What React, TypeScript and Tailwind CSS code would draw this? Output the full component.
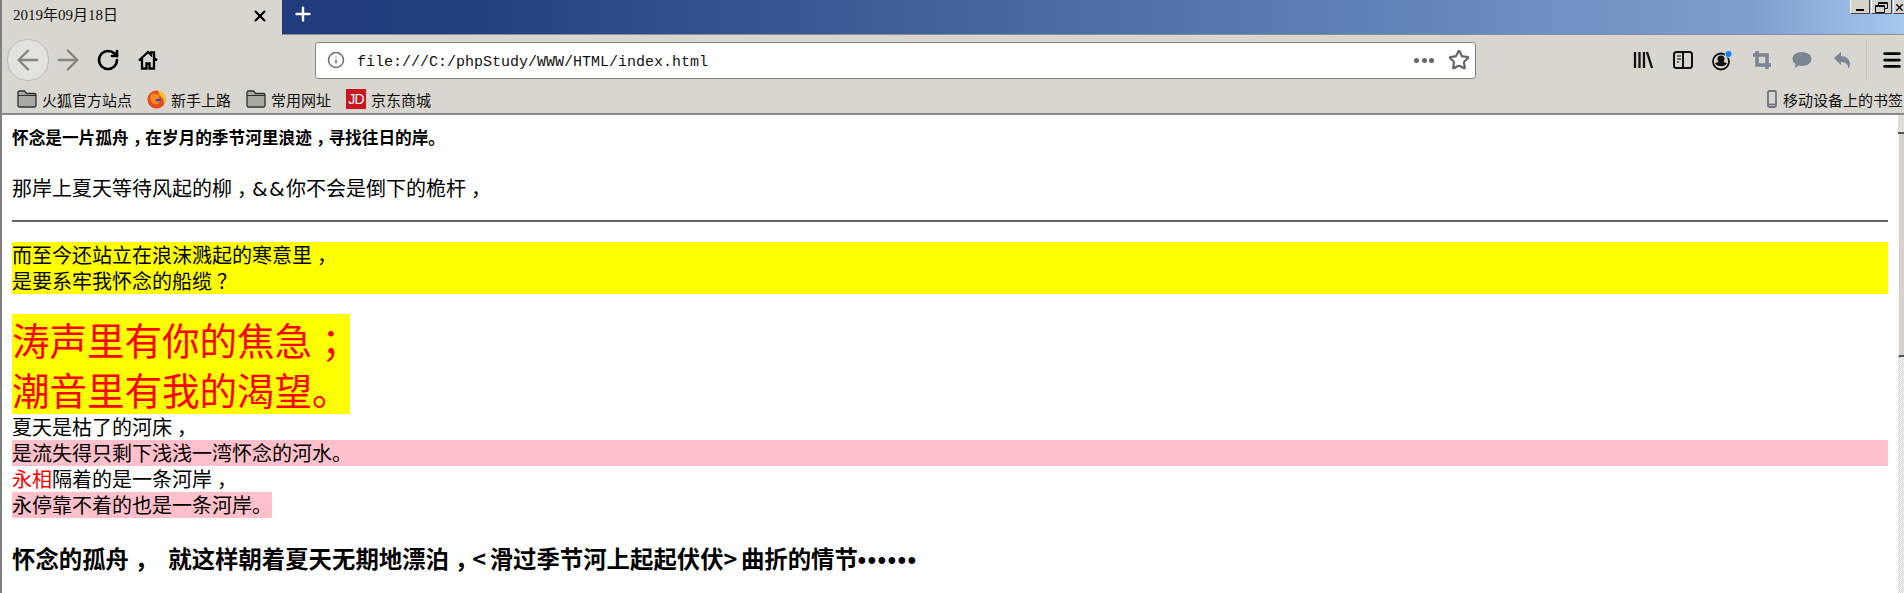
import { ArrowLeft, ArrowRight, Info, Menu, RotateCw, Star, X, Plus } from "lucide-react"

const cjk = "font-['Noto_Sans_CJK_SC','Liberation_Sans',sans-serif]"

// full-width punctuation sits in the middle of its cell in the picture
function P({ children }: { children: React.ReactNode }) {
  return <span className="mx-[.25em] [font-feature-settings:'halt']">{children}</span>
}

function Folder() {
  return (
    <svg width="20" height="18" viewBox="0 0 20 18" className="shrink-0">
      <path d="M1 2.500A1.500 1.500 0 0 1 2.500 1h5l2 2.500h8A1.500 1.500 0 0 1 19 5v10.500a1.500 1.500 0 0 1-1.500 1.500h-15A1.500 1.500 0 0 1 1 15.500z" fill="#a9a8a2" stroke="#2e2e2e" strokeWidth="1.300" />
      <path d="M1 5.500h18" stroke="#2e2e2e" strokeWidth="1" />
    </svg>
  )
}

function Firefox() {
  return (
    <svg width="19" height="19" viewBox="0 0 20 20" className="shrink-0">
      <circle cx="10" cy="10" r="9.500" fill="#e8491f" />
      <path d="M12 .5c4.500 1 7.500 5 7.500 9.500 0 2-.6 3.500-1.500 5 .3-4-1.500-7-4.500-9C12.500 5 12 3 12 .5z" fill="#ffc21a" />
      <circle cx="10" cy="10.500" r="4.300" fill="#4a3fb5" />
      <path d="M4 5c2-2 5.500-2 8 .5 1 1 1.500 2.500 1 4h-3.500c-.8 1-.5 2 .5 2.500 1.500.5 3 0 4-1-.5 3-3 4.500-5.500 4C4.500 14.500 2.500 9 4 5z" fill="#ff8a1c" />
    </svg>
  )
}

function Mark({ label, icon }: { label: string; icon: React.ReactNode }) {
  return (
    <div className={`flex items-center gap-[5px] text-[15px] leading-none text-[#111] ${cjk}`}>
      {icon}
      <span>{label}</span>
    </div>
  )
}

function WindowButtons() {
  const btn = "flex h-[14px] items-end justify-center border-l border-l-white border-r border-b border-r-[#444] border-b-[#444] bg-[#d6d3ce]"
  return (
    <div className="absolute right-0 top-0 flex gap-[1px]">
      <div className={`${btn} w-[20px] pb-[2px]`}>
        <div className="h-[2px] w-[8px] bg-black" />
      </div>
      <div className={`${btn} w-[21px] items-center`}>
        <svg width="13" height="11" viewBox="0 0 13 11">
          <path d="M3.500 3V.5h9v6H10M.5 3.500h9v7h-9zM.5 4.500h9M3.500 1.500h9" fill="none" stroke="#111" />
        </svg>
      </div>
      <div className={`${btn} w-[11px] items-center justify-start overflow-hidden border-r-0`}>
        <X size={11} strokeWidth={3} className="shrink-0" />
      </div>
    </div>
  )
}

function Browser() {
  return (
    <div className="shrink-0 border-b-2 border-[#8a8a8a] bg-[#d9d6d0]">
      <div className="relative flex h-[35px] border-b border-[#8f8f8f] bg-[linear-gradient(90deg,#1c3679_0%,#23407f_25%,#5f82b6_72%,#7e9fcf_92%,#a6c8ee_100%)]">
        <div className="-mb-px flex w-[280px] items-center justify-between bg-[#d9d6d0] pb-[4px] pl-[11px] pr-[13px]">
          <span className="font-['Liberation_Serif','Noto_Sans_CJK_SC',serif] text-[15px] text-[#111]">2019年09月18日</span>
          <X size={18} strokeWidth={2.6} className="text-black" />
        </div>
        <div className="ml-[10px] flex items-center pb-[6px]">
          <Plus size={22} strokeWidth={2.6} className="text-white" />
        </div>
        <WindowButtons />
      </div>
      <div className="flex h-[50px] items-center pl-[5px]">
        <div className="flex size-[42px] shrink-0 items-center justify-center rounded-full border border-[#bdbbb5] bg-[#e4e3de]">
          <ArrowLeft size={32} strokeWidth={1.7} className="text-[#85847f]" />
        </div>
        <ArrowRight size={32} strokeWidth={1.7} className="ml-[3px] shrink-0 text-[#85847f]" />
        <RotateCw size={24} strokeWidth={2.7} className="ml-[12px] shrink-0 text-black" />
        <svg width="20" height="20" viewBox="0 0 20 20" className="ml-[18px] shrink-0">
          <path d="M1 10.500 10 2l3 2.800V2.500h3v5l3 3M4 8.500V18.500h4.500v-5h3v5H16V8.500" fill="none" stroke="#000" strokeWidth="2.300" />
        </svg>
        <div className="ml-[157px] flex h-[37px] w-[1161px] shrink-0 items-center rounded-[3px] border border-[#858585] bg-white pl-[11px] pr-[5px]">
          <Info size={18} strokeWidth={2} className="text-[#6f6f6f]" />
          <span className="ml-[12px] flex-1 pt-[7px] font-['Liberation_Mono',monospace] text-[15px] text-[#111]">file:///C:/phpStudy/WWW/HTML/index.html</span>
          <div className="flex gap-[2.500px]">
            <div className="size-[5px] rounded-full bg-[#666]" />
            <div className="size-[5px] rounded-full bg-[#666]" />
            <div className="size-[5px] rounded-full bg-[#666]" />
          </div>
          <Star size={22} strokeWidth={2.4} className="ml-[14px] text-[#666]" />
        </div>
        <div className="ml-[157px] flex items-center">
          <svg width="20" height="18" viewBox="0 0 20 18"><path d="M2 1v16M6.500 1v16M11 1v16M14 1l5 16" stroke="#111" strokeWidth="2.300" fill="none" /></svg>
          <svg width="20" height="18" viewBox="0 0 20 18" className="ml-[20px]">
            <rect x="1" y="1" width="18" height="16" rx="2.500" fill="none" stroke="#111" strokeWidth="2" />
            <path d="M10 1v16" stroke="#111" strokeWidth="2" />
            <path d="M4 5h4M4 8h4M4 11h2" stroke="#111" strokeWidth="1.200" />
          </svg>
          <svg width="22" height="22" viewBox="0 0 22 22" className="ml-[18px]">
            <circle cx="10" cy="12.500" r="8" fill="none" stroke="#111" strokeWidth="1.800" />
            <circle cx="10" cy="10" r="3.500" fill="#111" />
            <path d="M4 14.500c2-2.500 10-2.500 12 0-1 1.500-3 2.700-6 2.700s-5-1.200-6-2.700z" fill="#111" />
            <circle cx="17.500" cy="5" r="3.800" fill="#d9d6d0" />
            <circle cx="17.500" cy="5" r="3" fill="#0a84ff" />
          </svg>
          <svg width="20" height="20" viewBox="0 0 20 20" className="ml-[19px]">
            <path d="M5 1v14h14M1 5h14v14" fill="none" stroke="#7a8694" strokeWidth="3.500" />
          </svg>
          <svg width="20" height="18" viewBox="0 0 20 18" className="ml-[20px]">
            <path d="M10 1c5.500 0 9.500 3 9.500 7s-4 7-9.500 7c-1 0-2 0-3-.4L3 17l.5-4C1.500 11.800.5 10 .5 8 .5 4 4.500 1 10 1z" fill="#7a8694" />
          </svg>
          <svg width="18" height="18" viewBox="0 0 18 18" className="ml-[21px]">
            <path d="M1 7 8 1v4c5 0 9 3 9 8 0 2-1 4-2 4 .5-3-2-6-7-6v3z" fill="#7a8694" />
          </svg>
          <div className="ml-[15px] h-[42px] w-px bg-[#c4c2bc]" />
          <Menu size={22} strokeWidth={3} className="ml-[14px] text-black" />
        </div>
      </div>
      <div className="flex h-[28px] items-center justify-between pl-[15px] pr-[1px]">
        <div className="flex items-center gap-[15px]">
          <Mark label="火狐官方站点" icon={<Folder />} />
          <Mark label="新手上路" icon={<Firefox />} />
          <Mark label="常用网址" icon={<Folder />} />
          <Mark
            label="京东商城"
            icon={<span className="flex size-[20px] items-center justify-center bg-[#c9151e] font-['Liberation_Sans',sans-serif] text-[14px] tracking-tighter text-white">JD</span>}
          />
        </div>
        <div className={`flex items-center gap-[6px] text-[15px] leading-none text-[#111] ${cjk}`}>
          <svg width="10" height="18" viewBox="0 0 10 18"><rect x="1" y="1" width="8" height="16" rx="1.500" fill="none" stroke="#6b7580" strokeWidth="1.800" /><path d="M1 14.500h8" stroke="#6b7580" strokeWidth="1.800" /></svg>
          <span>移动设备上的书签</span>
        </div>
      </div>
    </div>
  )
}

function Scrollbar() {
  return (
    <div className="flex w-[6px] shrink-0 flex-col">
      <div className="h-[19px] border-b-2 border-[#555] bg-[#e2dfda]" />
      <div className="h-[223px] border-b-2 border-l border-[#555] border-l-white bg-[#d6d3ce]" />
      <div className="flex-1 bg-[repeating-conic-gradient(#d6d3ce_0_25%,#ffffff_0_50%)] bg-[length:2px_2px]" />
    </div>
  )
}

export default function App() {
  return (
    <div className={`flex h-[593px] flex-col overflow-hidden border-l-2 border-[#808080] bg-white ${cjk}`}>
      <Browser />
      <div className="flex min-h-0 flex-1">
        <main className="min-w-0 flex-1 pl-[10px] pr-[10px] pt-[10px] text-[20px] leading-[26px] text-black">
          <p className="text-[16.670px] font-bold leading-[24px]">怀念是一片孤舟<P>，</P>在岁月的季节河里浪迹<P>，</P>寻找往日的岸。</p>
          <p className="mt-[26px]">那岸上夏天等待风起的柳<P>，</P><span className="font-['DejaVu_Sans',sans-serif] leading-none tracking-[1.400px]">&amp;&amp;</span>你不会是倒下的桅杆<P>，</P></p>
          <hr className="mt-[19px] border-t-2 border-[#666]" />
          <div className="mt-[20px] bg-[#ffff00]">
            而至今还站立在浪沫溅起的寒意里<P>，</P>
            <br />
            是要系牢我怀念的船缆<P>？</P>
          </div>
          <div className="mt-[20px] w-fit bg-[#ffff00] text-[37.500px] leading-[50px] text-[#ff0000]">
            涛声里有你的焦急<P>；</P>
            <br />
            潮音里有我的渴望。
          </div>
          <div>夏天是枯了的河床<P>，</P></div>
          <div className="bg-[#ffc0cb]">是流失得只剩下浅浅一湾怀念的河水。</div>
          <div><span className="text-[#ff0000]">永相</span>隔着的是一条河岸<P>，</P></div>
          <div className="w-fit bg-[#ffc0cb]">永停靠不着的也是一条河岸。</div>
          <p className="mt-[25px] text-[23.400px] font-bold leading-[30px]">
            怀念的孤舟<P>，</P>&nbsp;&nbsp;&nbsp;就这样朝着夏天无期地漂泊<P>，</P>
            <span className="tracking-[3.500px]">&lt;</span>滑过季节河上起起伏伏<span className="tracking-[3.500px]">&gt;</span>曲折的情节
            <span className="font-['Liberation_Sans',sans-serif] tracking-[1.800px]">••••••</span>
          </p>
        </main>
        <Scrollbar />
      </div>
    </div>
  )
}
